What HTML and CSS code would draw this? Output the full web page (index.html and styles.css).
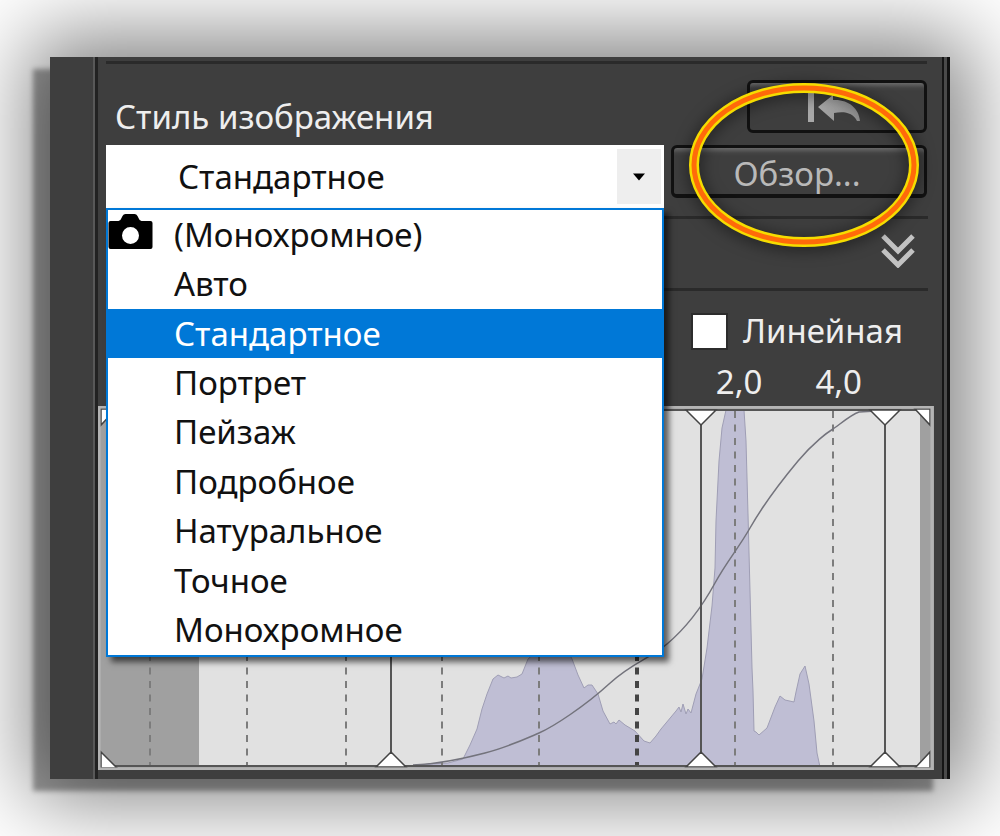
FILE: index.html
```html
<!DOCTYPE html>
<html lang="ru">
<head>
<meta charset="utf-8">
<meta name="viewport" content="width=device-width, initial-scale=1">
<title>Стиль изображения</title>
<link rel="stylesheet" href="styles.css">
</head>
<body>
<main class="panel">
  <div class="rail"></div>
  <div class="content">
    <section class="style-section">
      <div class="picker">
        <label class="picker-label" for="style">Стиль изображения</label>
        <div class="combo">
          <select class="combo-select" id="style">
            <option>(Монохромное)</option>
            <option>Авто</option>
            <option selected>Стандартное</option>
            <option>Портрет</option>
            <option>Пейзаж</option>
            <option>Подробное</option>
            <option>Натуральное</option>
            <option>Точное</option>
            <option>Монохромное</option>
          </select>
          <span class="combo-arrow"><svg width="14" height="8" viewBox="0 0 14 8"><path d="M1 0.500H13L7 7.500Z"/></svg></span>
          <ul class="menu" role="listbox" aria-label="Стиль изображения">
            <li class="menu-item" role="option">
              <svg class="camera" width="45" height="38" viewBox="0 0 44 38"><path fill="#000" fill-rule="evenodd" d="M0 9Q0 7 2 7H10Q12 7 13 4L14 2Q15 0 17 0H26Q28 0 29 2L30 4Q31 7 33 7H42Q44 7 44 9V33Q44 35 42 35H2Q0 35 0 33ZM22 13A8.500 8.500 0 1 0 22 30A8.500 8.500 0 1 0 22 13Z"/></svg>
              (Монохромное)</li>
            <li class="menu-item" role="option">Авто</li>
            <li class="menu-item selected" role="option" aria-selected="true">Стандартное</li>
            <li class="menu-item" role="option">Портрет</li>
            <li class="menu-item" role="option">Пейзаж</li>
            <li class="menu-item" role="option">Подробное</li>
            <li class="menu-item" role="option">Натуральное</li>
            <li class="menu-item" role="option">Точное</li>
            <li class="menu-item" role="option">Монохромное</li>
          </ul>
        </div>
      </div>
      <div class="actions">
        <button class="btn btn-reset" type="button" aria-label="Сбросить">
          <svg width="54" height="32" viewBox="0 0 54 32"><defs><linearGradient id="metal" x1="0" y1="0" x2="1" y2="1"><stop offset="0" stop-color="#b4b4b4"/><stop offset="1" stop-color="#8c8c8c"/></linearGradient></defs><path fill="#a8a8a8" d="M1 0H7V30H1Z"/><path fill="url(#metal)" d="M11 15L26 3V8C41 7 52 16 53 29H50C46 21 38 19 27 21V29Z"/></svg>
        </button>
        <button class="btn btn-browse" type="button">Обзор...</button>
        <svg class="highlight" width="230" height="164" viewBox="0 0 230 164"><g fill="none"><ellipse cx="115" cy="82" rx="110" ry="77" stroke="#f5dc00" stroke-width="10"/><ellipse cx="115" cy="82" rx="110" ry="77" stroke="#ff6a0a" stroke-width="5"/></g></svg>
      </div>
    </section>
    <section class="fold">
      <button class="fold-btn" type="button" aria-label="Развернуть"><svg width="34" height="34" viewBox="0 0 34 34"><path fill="none" stroke="#c2c2c2" stroke-width="5" d="M2 2L17 17L32 2M2 16L17 31L32 16"/></svg></button>
    </section>
    <section class="curve">
      <label class="linear"><input class="linear-box" type="checkbox">Линейная</label>
      <div class="axis"><span>2,0</span><span>4,0</span></div>
      <svg class="graph" viewBox="98 405 836 364" preserveAspectRatio="none" role="img" aria-label="Гистограмма">
        <rect x="98" y="405" width="836" height="364" fill="#a5a5a5"/>
        <rect x="101" y="408" width="829" height="358" fill="#e1e1e1"/>
        <rect x="101" y="408" width="98" height="358" fill="#a0a0a0"/>
        <rect x="920" y="408" width="10" height="358" fill="#a0a0a0"/>
        <path fill="#bfbed4" stroke="#9f9eb5" d="M415 764L448 762L463 758L470 744L477 728L482 708L487 693L493 678L498 674L504 677L508 675L511 677L517 676L522 673L528 658L543 645H565L572 658L578 674L584 687L588 684H592L598 693L603 710L610 723L614 721L616 723L619 719L625 724L635 730L644 740L650 742L656 735L661 728L676 710L679 706L681 711L683 703L686 713L688 708L691 712L696 693L700 683L702 678L707 647L712 605L715 567L716 520L719 460L722 427L726 409H744L746 440L748 513L750 590L752 667L753 690L754 730L756 731L759 734L767 727L775 706L780 695L785 699L794 701L796 691L800 673L805 665L809 683L814 720L817 752L820 766H415Z"/>
        <g stroke="#7c7c7c" stroke-width="2" stroke-dasharray="7 6.500"><path d="M150 410V765M247 410V765M346 410V765M442 410V765M539 410V765M735 410V765M833 410V765"/><path stroke="#444" stroke-width="4" d="M637 410V765"/></g>
        <path fill="none" stroke="#73737c" stroke-width="1.500" d="M413 764C440 763 462 758 485 752S525 738 539 732S585 705 609 683S648 659 667 643S703 604 715 582S738 548 750 527S783 478 798 460S828 431 833 428S850 414 859 411L876 410"/>
        <path fill="none" stroke="#555" stroke-width="2" d="M101 409H930M101 765H930M391 409V765M701 409V765M885 409V765"/>
        <g fill="#fff" stroke="#444" stroke-width="1.500"><path d="M686 409H716L701 424ZM870 409H900L885 424Z"/><path d="M376 766H406L391 751ZM686 766H716L701 751ZM870 766H900L885 751Z"/><path d="M101 408H116L101 424ZM915 408H930V424ZM101 767V751L117 767ZM915 767L930 751V767Z"/></g>
        <path fill="none" stroke="#b4b4b4" stroke-width="3" d="M98 406H932V768H99V406"/>
      </svg>
    </section>
  </div>
  <div class="edge"></div>
</main>
</body>
</html>
```
FILE: styles.css
```css
* { box-sizing: border-box; }

body {
  margin: 0;
  padding: 57px 50px 58px;
  background: #fff;
  color: #eee;
  font: 33px/44px "Noto Sans", "Open Sans", sans-serif;
  overflow-x: hidden;
}

.panel {
  display: flex;
  background: #3e3e3e;
  box-shadow: -17px 12px 5px rgba(0, 0, 0, .36), 0 0 80px 20px rgba(0, 0, 0, .5);
}

.rail {
  width: 48px;
  border-right: 3px solid #222;
  background: linear-gradient(to left, #585858 2px, #3e3e3e 2px);
}

.content { flex: 1; min-width: 0; padding: 4px 0 9px; }

.edge {
  width: 8px;
  background: linear-gradient(to right, #151515 2px, #4a4a4a 2px 5px, #111 5px);
}

.style-section,
.fold,
.curve { position: relative; }

.style-section { z-index: 1; }

.style-section::before,
.fold::before,
.curve::before {
  content: "";
  display: block;
  height: 3px;
  margin: 0 14px 0 8px;
  background: #2a2a2a;
}

.style-section {
  display: grid;
  grid-template-columns: 1fr 256px;
  column-gap: 7px;
  padding: 0 15px 8px 8px;
}

.style-section::before { grid-column: 1 / -1; margin: 0 0 16px; }

.picker-label { display: block; height: 65px; padding: 15px 0 0 9px; }

.combo { position: relative; height: 63px; }

.combo-select {
  width: 100%;
  height: 100%;
  padding: 0 0 0 72px;
  border: 0;
  border-radius: 0;
  background: #fff;
  color: #111;
  font: inherit;
  appearance: none;
}

.combo-arrow {
  position: absolute;
  top: 4px;
  right: 3px;
  bottom: 4px;
  width: 44px;
  display: grid;
  place-items: center;
  background: #eee;
  pointer-events: none;
}

.menu {
  position: absolute;
  top: 100%;
  left: 0;
  z-index: 2;
  width: 100%;
  height: 449px;
  margin: 0;
  padding: 0;
  display: grid;
  grid-auto-rows: 1fr;
  border: 2px solid #0078d7;
  background: #fff;
  color: #111;
  list-style: none;
  box-shadow: 5px 5px 6px rgba(0, 0, 0, .6);
}

.menu-item {
  position: relative;
  display: flex;
  align-items: center;
  padding-left: 66px;
}

.selected { background: #0078d7; color: #fff; }

.camera { position: absolute; left: 0; top: 4px; }

.actions {
  position: relative;
  display: flex;
  flex-direction: column;
  align-items: flex-end;
  gap: 12px;
}

.btn {
  height: 53px;
  padding: 0;
  display: grid;
  place-items: center;
  border: 3px solid #111;
  border-radius: 6px;
  background: linear-gradient(#686868, #444 5px, #3e3e3e 8px);
  color: #b9b9b9;
  font: inherit;
}

.btn-reset { width: 180px; padding: 2px 6px 0 0; }

.btn-browse { width: 100%; border-bottom-width: 4px; padding: 4px 4px 0 0; }

.highlight {
  position: absolute;
  top: 3px;
  right: 8px;
  overflow: visible;
  filter: drop-shadow(0 2px 8px rgba(0, 0, 0, .6));
  pointer-events: none;
}

.fold { height: 72px; }

.fold-btn {
  display: block;
  margin: 15px 27px 0 auto;
  padding: 0;
  border: 0;
  background: none;
  line-height: 0;
}

.linear {
  display: flex;
  justify-content: flex-end;
  align-items: center;
  gap: 17px;
  padding: 18px 39px 0 0;
}

.linear-box {
  width: 33px;
  height: 33px;
  margin: 0;
  appearance: none;
  background: #fff;
  outline: 2px solid #2c2c2c;
}

.axis {
  display: flex;
  justify-content: flex-end;
  gap: 53px;
  height: 53px;
  padding: 7px 80px 0 0;
}

.graph { display: block; width: calc(100% - 8px); height: 364px; }
```
